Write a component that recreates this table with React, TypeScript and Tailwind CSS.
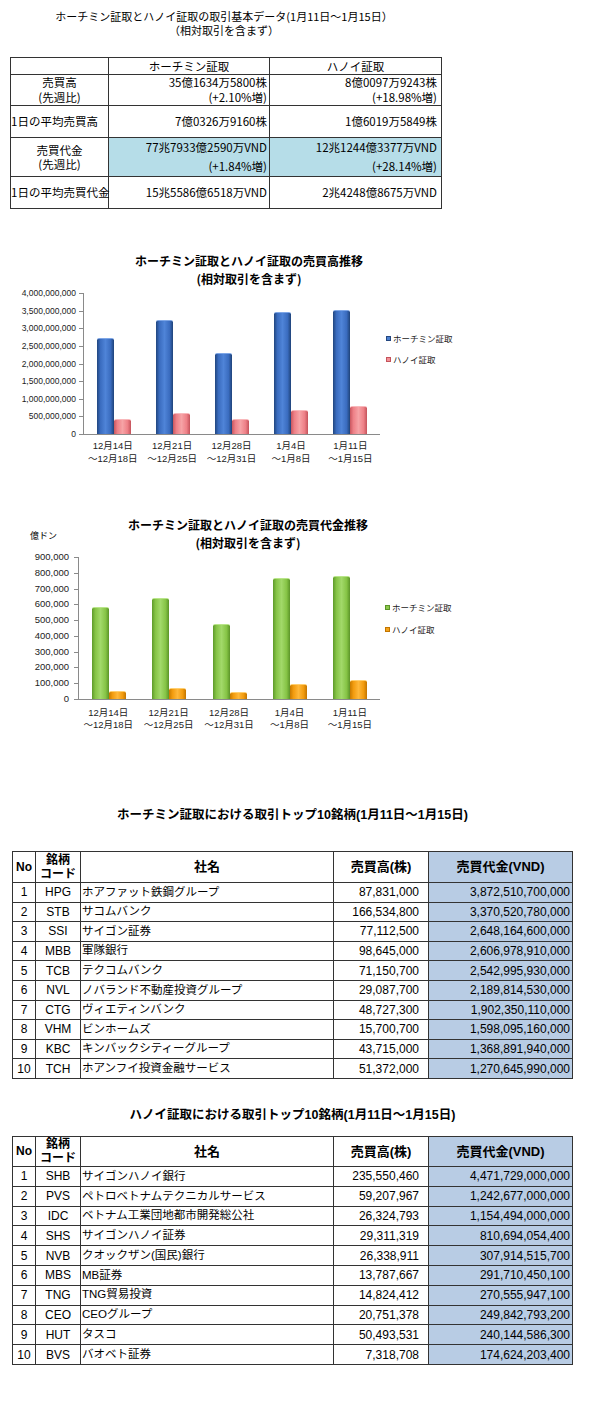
const JP = "font-['Noto_Sans_CJK_JP',sans-serif]";
const MIX = "font-['Liberation_Sans','Noto_Sans_CJK_JP',sans-serif]";
const LINE = "border-[#333]";

type Week = { l1: string; l2: string; a: number; b: number };

const volWeeks: Week[] = [
  { l1: "12月14日", l2: "～12月18日", a: 2.71, b: 0.44 },
  { l1: "12月21日", l2: "～12月25日", a: 3.23, b: 0.6 },
  { l1: "12月28日", l2: "～12月31日", a: 2.29, b: 0.44 },
  { l1: "1月4日", l2: "～1月8日", a: 3.46, b: 0.68 },
  { l1: "1月11日", l2: "～1月15日", a: 3.52, b: 0.8 },
];

const valWeeks: Week[] = [
  { l1: "12月14日", l2: "～12月18日", a: 585, b: 51 },
  { l1: "12月21日", l2: "～12月25日", a: 638, b: 68 },
  { l1: "12月28日", l2: "～12月31日", a: 473, b: 46 },
  { l1: "1月4日", l2: "～1月8日", a: 765, b: 95 },
  { l1: "1月11日", l2: "～1月15日", a: 778, b: 121 },
];

const hcmRows = [
  ["1", "HPG", "ホアファット鉄鋼グループ", "87,831,000", "3,872,510,700,000"],
  ["2", "STB", "サコムバンク", "166,534,800", "3,370,520,780,000"],
  ["3", "SSI", "サイゴン証券", "77,112,500", "2,648,164,600,000"],
  ["4", "MBB", "軍隊銀行", "98,645,000", "2,606,978,910,000"],
  ["5", "TCB", "テクコムバンク", "71,150,700", "2,542,995,930,000"],
  ["6", "NVL", "ノバランド不動産投資グループ", "29,087,700", "2,189,814,530,000"],
  ["7", "CTG", "ヴィエティンバンク", "48,727,300", "1,902,350,110,000"],
  ["8", "VHM", "ビンホームズ", "15,700,700", "1,598,095,160,000"],
  ["9", "KBC", "キンバックシティーグループ", "43,715,000", "1,368,891,940,000"],
  ["10", "TCH", "ホアンフイ投資金融サービス", "51,372,000", "1,270,645,990,000"],
];

const hnxRows = [
  ["1", "SHB", "サイゴンハノイ銀行", "235,550,460", "4,471,729,000,000"],
  ["2", "PVS", "ペトロベトナムテクニカルサービス", "59,207,967", "1,242,677,000,000"],
  ["3", "IDC", "ベトナム工業団地都市開発総公社", "26,324,793", "1,154,494,000,000"],
  ["4", "SHS", "サイゴンハノイ証券", "29,311,319", "810,694,054,400"],
  ["5", "NVB", "クオックザン(国民)銀行", "26,338,911", "307,914,515,700"],
  ["6", "MBS", "MB証券", "13,787,667", "291,710,450,100"],
  ["7", "TNG", "TNG貿易投資", "14,824,412", "270,555,947,100"],
  ["8", "CEO", "CEOグループ", "20,751,378", "249,842,793,200"],
  ["9", "HUT", "タスコ", "50,493,531", "240,144,586,300"],
  ["10", "BVS", "バオベト証券", "7,318,708", "174,624,203,400"],
];

function Bar({ h, cls }: { h: number; cls: string }) {
  return <div className={`w-[17px] rounded-t-[2px] border-t ${cls}`} style={{ height: `${h}px` }} />;
}

type ChartProps = {
  weeks: Week[];
  max: number;
  inner: number;
  yLabels: string[];
  labelCol: string;
  tickCol: string;
  plot: string;
  xlab: string;
  legend: string;
  barA: string;
  barB: string;
  keyA: string;
  keyB: string;
};

function Chart(p: ChartProps) {
  return (
    <div className={`flex items-start text-[#222] ${MIX}`}>
      <div className={`flex flex-col justify-between text-right leading-[10px] ${p.labelCol}`}>
        {p.yLabels.map((l) => (
          <div key={l}>{l}</div>
        ))}
      </div>
      <div className={`mt-[5px] flex flex-col justify-between ${p.tickCol}`}>
        {p.yLabels.map((l) => (
          <div key={l} className="h-px bg-[#8a8a8a]" />
        ))}
      </div>
      <div className="mt-[5px] flex flex-col">
        <div className={`flex border-b border-l border-[#8a8a8a] ${p.plot}`}>
          {p.weeks.map((w) => (
            <div key={w.l1} className="flex flex-1 items-end justify-center">
              <Bar h={(w.a / p.max) * p.inner} cls={p.barA} />
              <Bar h={(w.b / p.max) * p.inner} cls={p.barB} />
            </div>
          ))}
        </div>
        <div className={`flex text-[9.5px] ${p.xlab}`}>
          {p.weeks.map((w) => (
            <div key={w.l1} className="flex-1 text-center whitespace-nowrap">
              <div>{w.l1}</div>
              <div>{w.l2}</div>
            </div>
          ))}
        </div>
      </div>
      <div className={`flex flex-col text-[8.5px] leading-[12px] ${JP} ${p.legend}`}>
        <div className="flex items-center gap-[2px]">
          <span className={`h-[5px] w-[5px] ${p.keyA}`} />
          ホーチミン証取
        </div>
        <div className="flex items-center gap-[2px]">
          <span className={`h-[5px] w-[5px] ${p.keyB}`} />
          ハノイ証取
        </div>
      </div>
    </div>
  );
}

function TopTable({ rows, head, rowH }: { rows: string[][]; head: string; rowH: string }) {
  return (
    <div className={`ml-[12px] w-[561px] border-l border-t ${LINE} text-[12px] ${MIX}`}>
      <div className={`flex border-b ${LINE} ${head} font-bold`}>
        <div className={`flex w-[23px] items-center justify-center border-r ${LINE}`}>No</div>
        <div className={`flex w-[45px] flex-col items-center justify-center border-r leading-[14px] ${LINE}`}>
          <div>銘柄</div>
          <div>コード</div>
        </div>
        <div className={`flex w-[253px] items-center justify-center border-r text-[13px] ${LINE}`}>社名</div>
        <div className={`flex w-[95px] items-center justify-center border-r text-[13px] ${LINE}`}>売買高(株)</div>
        <div className={`flex w-[144px] items-center justify-center border-r bg-[#b8cce4] text-[13px] ${LINE}`}>
          売買代金(VND)
        </div>
      </div>
      {rows.map((r) => (
        <div key={r[0]} className={`flex border-b ${LINE} ${rowH}`}>
          <div className={`flex w-[23px] items-center justify-center border-r ${LINE}`}>{r[0]}</div>
          <div className={`flex w-[45px] items-center justify-center border-r ${LINE}`}>{r[1]}</div>
          <div className={`flex w-[253px] items-center whitespace-nowrap border-r pl-[1px] text-[11.5px] ${LINE}`}>
            {r[2]}
          </div>
          <div className={`flex w-[95px] items-center justify-end border-r pr-[9px] ${LINE}`}>{r[3]}</div>
          <div className={`flex w-[144px] items-center justify-end border-r bg-[#b8cce4] pr-[2px] ${LINE}`}>
            {r[4]}
          </div>
        </div>
      ))}
    </div>
  );
}

export default function App() {
  return (
    <div className="h-[1415px] w-[600px] bg-white text-black">
      {/* 基本データ */}
      <div className={`w-[448px] pt-[9px] text-center text-[11px] leading-[14px] ${JP}`}>
        <div>ホーチミン証取とハノイ証取の取引基本データ(1月11日～1月15日）</div>
        <div>（相対取引を含まず）</div>
      </div>

      <div className={`ml-[10px] mt-[20px] w-[432px] border-l border-t ${LINE} text-[11.5px] ${JP}`}>
        <div className={`flex h-[17px] border-b leading-[16px] ${LINE}`}>
          <div className={`w-[98px] border-r ${LINE}`} />
          <div className={`w-[161px] border-r text-center ${LINE}`}>ホーチミン証取</div>
          <div className={`w-[172px] border-r text-center ${LINE}`}>ハノイ証取</div>
        </div>
        <div className={`flex h-[31px] border-b leading-[15px] ${LINE}`}>
          <div className={`flex w-[98px] flex-col items-center justify-center border-r ${LINE}`}>
            <div>売買高</div>
            <div>(先週比)</div>
          </div>
          <div className={`flex w-[161px] flex-col items-end justify-center border-r pr-[2px] ${LINE}`}>
            <div>35億1634万5800株</div>
            <div>(+2.10%増)</div>
          </div>
          <div className={`flex w-[172px] flex-col items-end justify-center border-r pr-[4px] ${LINE}`}>
            <div>8億0097万9243株</div>
            <div>(+18.98%増)</div>
          </div>
        </div>
        <div className={`flex h-[32px] border-b ${LINE}`}>
          <div className={`flex w-[98px] items-center whitespace-nowrap border-r ${LINE}`}>1日の平均売買高</div>
          <div className={`flex w-[161px] items-center justify-end border-r pr-[2px] ${LINE}`}>7億0326万9160株</div>
          <div className={`flex w-[172px] items-center justify-end border-r pr-[4px] ${LINE}`}>1億6019万5849株</div>
        </div>
        <div className={`flex h-[39px] border-b ${LINE}`}>
          <div className={`flex w-[98px] flex-col items-center justify-center border-r leading-[14px] ${LINE}`}>
            <div>売買代金</div>
            <div>(先週比)</div>
          </div>
          <div
            className={`flex w-[161px] flex-col items-end justify-center border-r bg-[#b6dde8] pr-[2px] leading-[19px] ${LINE}`}
          >
            <div>77兆7933億2590万VND</div>
            <div>(+1.84%増)</div>
          </div>
          <div
            className={`flex w-[172px] flex-col items-end justify-center border-r bg-[#b6dde8] pr-[4px] leading-[19px] ${LINE}`}
          >
            <div>12兆1244億3377万VND</div>
            <div>(+28.14%増)</div>
          </div>
        </div>
        <div className={`flex h-[32px] border-b ${LINE}`}>
          <div className={`flex w-[98px] items-center whitespace-nowrap border-r ${LINE}`}>1日の平均売買代金</div>
          <div className={`flex w-[161px] items-center justify-end border-r pr-[2px] ${LINE}`}>15兆5586億6518万VND</div>
          <div className={`flex w-[172px] items-center justify-end border-r pr-[4px] ${LINE}`}>2兆4248億8675万VND</div>
        </div>
      </div>

      {/* 売買高推移 */}
      <div className="mt-[43px] flex">
        <div className="w-[49px]" />
        <div className={`w-[400px] text-center text-[12px] font-bold leading-[18px] ${JP}`}>
          <div>ホーチミン証取とハノイ証取の売買高推移</div>
          <div>(相対取引を含まず)</div>
        </div>
      </div>
      <Chart
        weeks={volWeeks}
        max={4}
        inner={141}
        yLabels={[
          "4,000,000,000",
          "3,500,000,000",
          "3,000,000,000",
          "2,500,000,000",
          "2,000,000,000",
          "1,500,000,000",
          "1,000,000,000",
          "500,000,000",
          "0",
        ]}
        labelCol="h-[151px] w-[79px] pr-[3px] text-[8.5px]"
        tickCol="h-[142px] w-[4px]"
        plot="h-[142px] w-[297px]"
        xlab="mt-[3.5px] leading-[13px]"
        legend="ml-[6px] mt-[44px] gap-[9px]"
        barA="border-t-[#7ea6e6] bg-[linear-gradient(to_right,#21467f_0%,#3a6cbf_20%,#4f84d8_50%,#3a6cbf_80%,#1f4379_100%)]"
        barB="border-t-[#f8b8bb] bg-[linear-gradient(to_right,#c9575f_0%,#ee8087_20%,#f6a3a6_50%,#ee8087_80%,#c4535b_100%)]"
        keyA="border border-[#24477f] bg-[#4a7fd0]"
        keyB="border border-[#c4535b] bg-[#f29097]"
      />

      {/* 売買代金推移 */}
      <div className="mt-[51.5px] flex">
        <div className={`w-[57px] pt-[14px] text-right text-[9px] leading-[12px] ${JP}`}>億ドン</div>
        <div className={`w-[382px] text-center text-[12px] font-bold leading-[18px] ${JP}`}>
          <div>ホーチミン証取とハノイ証取の売買代金推移</div>
          <div>(相対取引を含まず)</div>
        </div>
      </div>
      <Chart
        weeks={valWeeks}
        max={900}
        inner={142}
        yLabels={[
          "900,000",
          "800,000",
          "700,000",
          "600,000",
          "500,000",
          "400,000",
          "300,000",
          "200,000",
          "100,000",
          "0",
        ]}
        labelCol="h-[152px] w-[74px] pr-[5px] text-[9.5px]"
        tickCol="h-[143px] w-[4px]"
        plot="h-[143px] w-[302px]"
        xlab="mt-[6.5px] leading-[12px]"
        legend="ml-[5px] mt-[49px] gap-[10px]"
        barA="border-t-[#b9e58a] bg-[linear-gradient(to_right,#5e9a2b_0%,#86c446_20%,#a2d96a_50%,#86c446_80%,#5b9428_100%)]"
        barB="border-t-[#ffcf70] bg-[linear-gradient(to_right,#c77a00_0%,#f29b0e_20%,#ffb83a_50%,#f29b0e_80%,#c27500_100%)]"
        keyA="border border-[#5b9428] bg-[#8cc84b]"
        keyB="border border-[#c27500] bg-[#f5a31a]"
      />

      {/* ホーチミン証取 トップ10 */}
      <div className={`ml-[12px] mt-[76.5px] w-[561px] text-center text-[12.5px] font-bold leading-[16px] ${MIX}`}>
        ホーチミン証取における取引トップ10銘柄(1月11日～1月15日)
      </div>
      <div className="mt-[28px]">
        <TopTable rows={hcmRows} head="h-[31px]" rowH="h-[19.6px]" />
      </div>

      {/* ハノイ証取 トップ10 */}
      <div className={`ml-[12px] mt-[28px] w-[561px] text-center text-[12.5px] font-bold leading-[16px] ${MIX}`}>
        ハノイ証取における取引トップ10銘柄(1月11日～1月15日)
      </div>
      <div className="mt-[13px]">
        <TopTable rows={hnxRows} head="h-[30px]" rowH="h-[19.8px]" />
      </div>
    </div>
  );
}
